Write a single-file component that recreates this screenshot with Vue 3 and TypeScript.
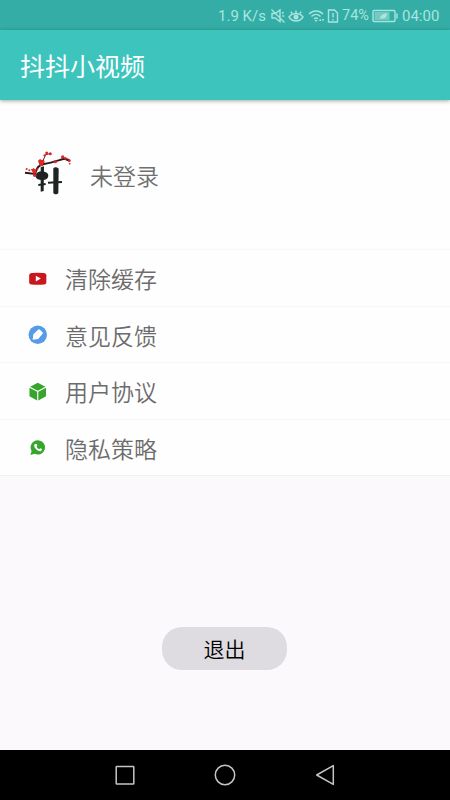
<script setup lang="ts">
interface MenuItem {
  icon: 'video' | 'feedback' | 'box' | 'phone'
  label: string
}

const items: MenuItem[] = [
  { icon: 'video', label: '清除缓存' },
  { icon: 'feedback', label: '意见反馈' },
  { icon: 'box', label: '用户协议' },
  { icon: 'phone', label: '隐私策略' },
]
</script>

<template>
  <div class="screen">
    <header class="status">
      <span class="speed">1.9 K/s</span>
      <svg class="mute" viewBox="0 0 16 16" width="16" height="16">
        <path d="M2 5.5h3.2L10 2v11.5L5.2 10H2zM1.5 1.5l13 13M12 5.5l1.6-1.4M12.3 8h2" />
      </svg>
      <svg class="eye" viewBox="0 0 16 16" width="16" height="16">
        <path d="M1 9c3.8-4.6 10.2-4.6 14 0-3.8 5.4-10.2 5.4-14 0z" />
        <circle cx="8" cy="9" r="2.5" class="solid" />
        <path d="M8 5V2.500M4.200 5.500 2.800 3.600M11.800 5.500l1.400-1.900" />
      </svg>
      <svg class="wifi" viewBox="0 0 17 16" width="17" height="16">
        <path d="M1 6c4-4 10-4 14 0M3.500 8.500c2.700-2.600 6.300-2.600 9 0M6 11c1.300-1.200 2.700-1.200 4 0" />
        <path class="solid" d="M6.500 12h3L8 14zM11 13l1.200-2.500 1.200 2.500zM13.800 11l1.200 2.500 1.200-2.500z" />
      </svg>
      <svg class="sim" viewBox="0 0 12 16" width="12" height="16">
        <path d="M1.500 2h6L10.500 5v9h-9zM6 5v4.500M6 11v1.500" />
      </svg>
      <span class="percent">74%</span>
      <svg class="battery" viewBox="0 0 27 14" width="27" height="14">
        <rect x="1" y="1.500" width="22" height="11" rx="1" />
        <rect x="2.500" y="3" width="15" height="8" class="charge" />
        <path class="leaf" d="M8 10c0-4 3-5 7-6 0 4-2 6.500-6 5.500z" />
        <path d="M25 4.500v5" />
      </svg>
      <span class="clock">04:00</span>
    </header>

    <div class="toolbar"><h1>抖抖小视频</h1></div>

    <main>
      <section class="profile">
        <svg class="logo" viewBox="0 0 162 156" width="54" height="52">
          <g class="ink">
            <path d="M47 88C50 73 75 72 84 84c4 13-7 19-20 18C52 102 46 96 47 88z" />
            <path d="M62 64l10-3-1 74-9 2z" />
            <path d="M100 67c4-6 15-4 16 2l-1 72c-3 5-12 5-15 0z" />
          </g>
          <path class="strokes" d="M55 117l22-3M84 110l42-2" />
          <path class="branch" d="M15 80l30 4C50 65 56 57 72 54c23-4 40-10 61-16l17 7" />
          <path class="twig" d="M65 53L77 26l12-3M43 80L34 70M133 38l15 2" />
          <g class="blossom">
            <circle cx="80" cy="21" r="4.500" />
            <circle cx="91" cy="23" r="4.500" />
            <circle cx="74" cy="28" r="3.500" />
            <path d="M54 44l6-5 5 3 7-1 2 7-4 6-12 2zM34 71l7-5 4 4 5 4-2 8-7 2z" />
            <circle cx="64" cy="56" r="5" />
            <circle cx="52" cy="70" r="3" />
            <circle cx="20" cy="69" r="3" />
            <circle cx="28" cy="73" r="3" />
            <circle cx="44" cy="88" r="5" />
            <circle cx="106" cy="47" r="5" />
            <circle cx="128" cy="33" r="5" />
            <circle cx="136" cy="37" r="4" />
            <circle cx="148" cy="44" r="4" />
            <circle cx="149" cy="53" r="2.500" />
          </g>
        </svg>
        <span>未登录</span>
      </section>

      <nav>
        <a v-for="item in items" :key="item.label" class="row">
          <svg v-if="item.icon === 'video'" viewBox="0 0 20 20" width="20" height="20">
            <path fill="#c8171e" d="M3.500 4Q10 3.500 16.500 4 18.700 4.200 18.800 6.500v7q-.1 2.300-2.300 2.500-6.500.500-13 0Q1.300 15.800 1.200 13.500v-7Q1.300 4.200 3.500 4z" />
            <path fill="#fff" d="M8 6.800v6l5.200-3z" />
          </svg>
          <svg v-else-if="item.icon === 'feedback'" viewBox="0 0 20 20" width="20" height="20">
            <circle cx="10" cy="10" r="9.500" fill="#559be6" />
            <path fill="#fff" d="M4.800 15l.7-5.500L10.600 4.700q.9-.6 1.600.1l2.700 2.700q.6.900 0 1.700L10.400 14.400z" />
          </svg>
          <svg v-else-if="item.icon === 'box'" viewBox="0 0 20 20" width="20" height="20">
            <path fill="#35a52c" d="M10 .8l7.800 4L10 8.900 2.200 4.800zM1.500 6l7.900 4.100v8.900l-7.900-4.400zM18.500 6l-7.900 4.100v8.900l7.900-4.400z" />
          </svg>
          <svg v-else viewBox="0 0 20 20" width="20" height="20">
            <path fill="#35a52c" d="M10.200 2.200a7.400 7.400 0 1 1-3.400 14L2.500 17.500l1.200-4.200A7.400 7.400 0 0 1 10.200 2.200z" />
            <path fill="#fff" d="M7.600 5.900l1.300.2.700 1.800-.8 1.100q.9 1.700 2.700 2.500l1-1.100 1.900.9q.1 1.700-1.400 2.200-2.200.400-4.700-2-2.300-2.300-2-4.100.2-1 1.300-1.500z" />
          </svg>
          <span>{{ item.label }}</span>
        </a>
      </nav>

      <button type="button" class="logout">退出</button>
    </main>

    <footer class="navbar">
      <svg viewBox="0 0 24 24" width="24" height="24"><rect x="3.200" y="3.400" width="17.600" height="17.600" rx=".6" /></svg>
      <svg viewBox="0 0 24 24" width="24" height="24"><circle cx="12" cy="12" r="9.700" /></svg>
      <svg viewBox="0 0 24 24" width="24" height="24"><path d="M20.300 2.600v18.800L3.700 12z" /></svg>
    </footer>
  </div>
</template>

<style>
body {
  margin: 0;
}
</style>

<style scoped>
.screen {
  width: 450px;
  height: 800px;
  display: flex;
  flex-direction: column;
  overflow: hidden;
  background: #fbf9fc;
  font-family: "Noto Sans CJK SC", sans-serif;
}
.status {
  height: 30px;
  flex: none;
  display: flex;
  align-items: center;
  box-sizing: border-box;
  padding: 1px 0 0 218px;
  background: #33ada5;
  color: #a9e5df;
  font: 15px/28px Roboto, sans-serif;
  white-space: nowrap;
}
.status svg {
  flex: none;
  fill: none;
  stroke: #a9e5df;
  stroke-width: 1.4;
}
.status .solid,
.status .leaf {
  fill: #a9e5df;
  stroke: none;
}
.status .charge {
  fill: #72cac3;
  stroke: none;
}
.speed {
  width: 52px;
  flex: none;
}
.eye {
  margin-left: 2px;
}
.wifi {
  margin-left: 4px;
}
.sim {
  margin-left: 2px;
}
.percent {
  width: 29px;
  flex: none;
  margin-left: 3px;
  font-size: 14.5px;
}
.battery {
  margin-left: 1px;
}
.clock {
  margin-left: 3px;
}
.toolbar {
  position: relative;
  z-index: 1;
  height: 70px;
  flex: none;
  display: flex;
  align-items: center;
  padding-left: 20px;
  background: #3cc4bd;
  box-shadow: 0 1px 4px rgba(0, 0, 0, 0.35);
}
h1 {
  margin: 0;
  color: #fff;
  font-size: 25px;
  line-height: 36px;
  font-weight: 400;
}
main {
  flex: 1;
  display: flex;
  flex-direction: column;
  align-items: center;
}
.profile {
  width: 100%;
  height: 150px;
  box-sizing: border-box;
  display: flex;
  align-items: center;
  gap: 16px;
  padding: 0 0 0 20px;
  background: #fefefe;
  color: #707070;
  font-size: 23px;
  font-weight: 350;
  border-bottom: 1px solid #f8f6f9;
}
.logo {
  margin-top: -6px;
}
.ink {
  fill: #202224;
}
.strokes {
  fill: none;
  stroke: #202224;
  stroke-width: 6;
}
.branch {
  fill: none;
  stroke: #30191b;
  stroke-width: 6;
}
.twig {
  fill: none;
  stroke: #5b2222;
  stroke-width: 3;
}
.blossom {
  fill: #d82928;
}
nav {
  width: 100%;
  height: 226px;
  display: grid;
  grid-template-rows: repeat(4, 1fr);
}
.row {
  box-sizing: border-box;
  display: flex;
  align-items: center;
  gap: 17px;
  padding: 1px 0 0 28px;
  background: #fefefe;
  border-bottom: 1px solid #f8f6f9;
  color: #6c6c6c;
  font-size: 23px;
  font-weight: 350;
}
.row svg {
  width: 19.5px;
  height: 19.5px;
  margin-right: 0.5px;
}
.row:last-child {
  border-bottom-color: #f0eef1;
}
.logout {
  width: 125px;
  height: 43px;
  margin: 151px 1px 0 0;
  padding: 0;
  border: 0;
  border-radius: 20px;
  background: #dedce0;
  color: #000;
  font: 350 21px/43px "Noto Sans CJK SC", sans-serif;
}
.navbar {
  height: 50px;
  flex: none;
  display: flex;
  justify-content: center;
  align-items: center;
  gap: 76px;
  background: #000;
}
.navbar svg {
  fill: none;
  stroke: #c5c5c5;
  stroke-width: 1.5;
  stroke-linejoin: round;
}
</style>
